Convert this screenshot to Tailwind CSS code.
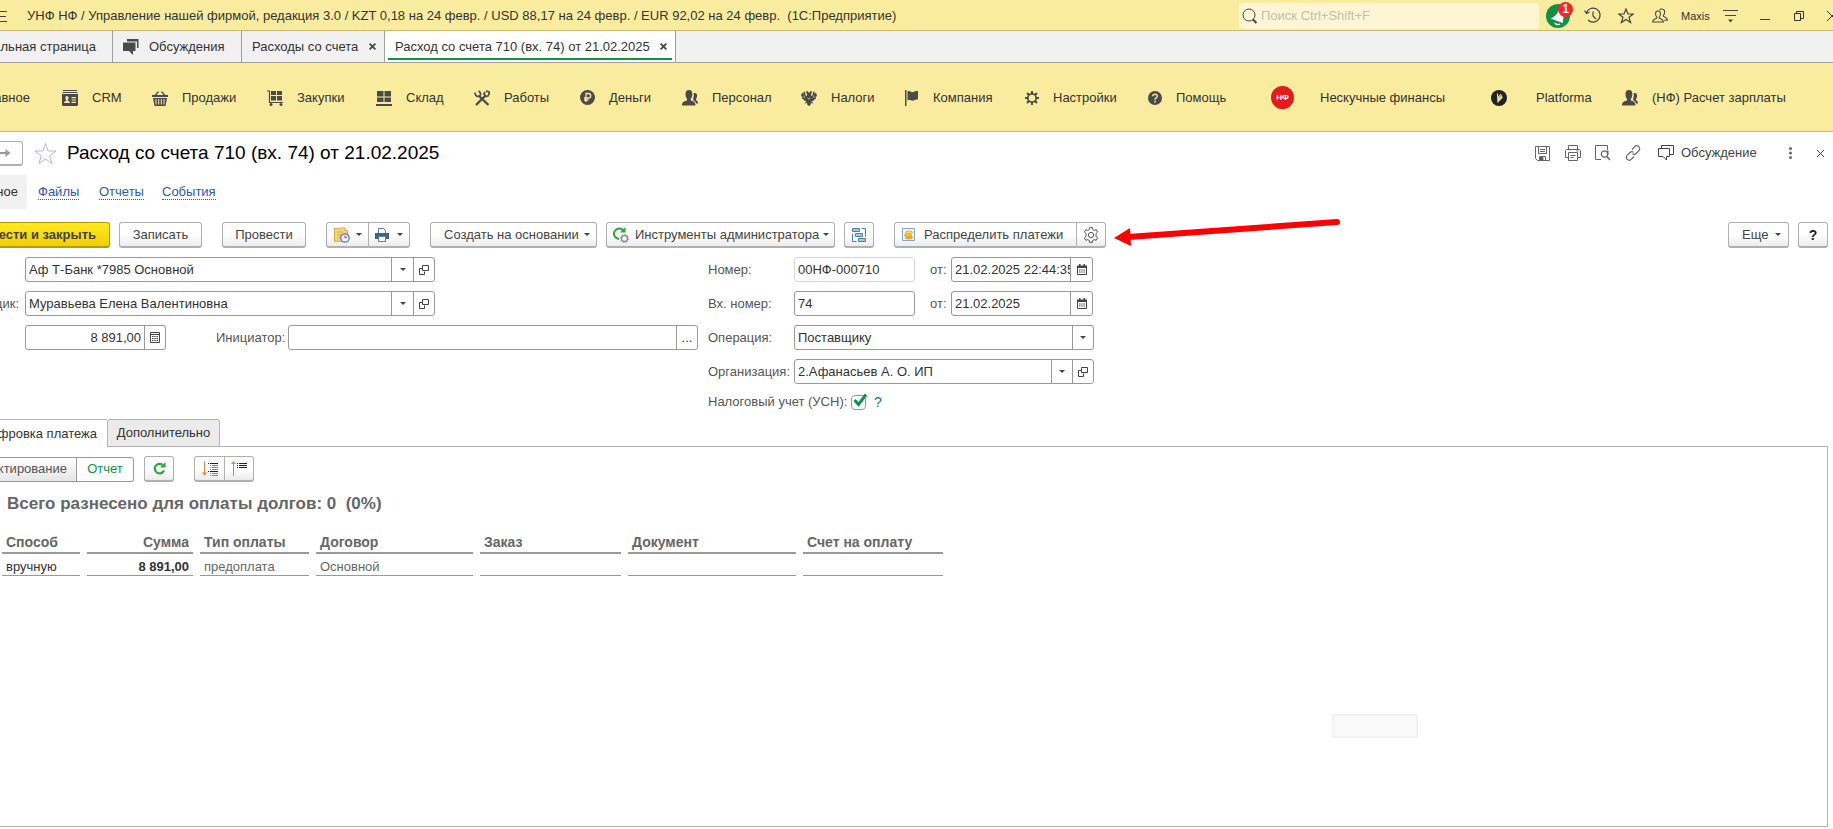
<!DOCTYPE html>
<html lang="ru">
<head>
<meta charset="utf-8">
<title>Расход со счета 710</title>
<script src="https://cdn.jsdelivr.net/npm/@tailwindcss/browser@4"></script>
</head>
<body class="flex min-h-screen flex-col overflow-x-hidden bg-white font-['Liberation_Sans',Arial,sans-serif] text-[13px] leading-4 whitespace-nowrap text-[#333]">

<svg class="hidden" aria-hidden="true">
  <symbol id="tri" viewBox="0 0 6 3"><path d="M0 0h6L3 3z" fill="#444"/></symbol>
  <symbol id="open" viewBox="0 0 10 10"><path d="M3.500.5h6v5h-6zM3.500 3.500h-3v6h5v-3" fill="none" stroke="#444"/></symbol>
  <symbol id="cal" viewBox="0 0 10 11"><path d="M.5 2.500h9v8h-9z" fill="none" stroke="#444"/><path d="M0 1.500h10V4H0zM2 0h1.500v2H2zM6.500 0H8v2H6.500zM2 5.500h1.500v1H2zM4.300 5.500h1.400v1H4.300zM6.500 5.500H8v1H6.500zM2 7.500h1.500v1H2zM4.300 7.500h1.400v1H4.300zM6.500 7.500H8v1H6.500z" fill="#444"/></symbol>
  <symbol id="people" viewBox="0 0 16 16"><path d="M7 0C4.300 0 3.300 2 3.500 4.500c.1 2 .8 3.500 1.500 4.500v1.300c-2 1.200-5 1.200-5 5.200h13.500c0-4-3-4-4.700-5.200V9c.7-1 1.400-2.500 1.500-4.500C10.500 2 9.700 0 7 0z" fill="#4a4a4a"/><path d="M12.700 3c1.800 0 2.500 1.300 2.400 3-.1 1.400-.6 2.300-1.100 3v1c1 .8 2 1.200 2 3.500h-1.800c-.5-1.600-1.600-2.500-3-3.300V8.500c.5-1.400.7-3.400.4-5.200.3-.2.700-.3 1.100-.3z" fill="#4a4a4a"/></symbol>
</svg>

<header class="flex h-[31px] shrink-0 items-center overflow-hidden border-b border-[#c9b968] bg-[#faec9f] pt-px">
  <button class="h-4 w-[7px]" aria-label="Меню"><svg class="h-4 w-[7px]" viewBox="0 0 7 16"><path d="M0 3.500h7M0 8.500h6M0 13.500h7" stroke="#444"/></svg></button>
  <h1 class="ml-5 flex-1 whitespace-pre">УНФ НФ / Управление нашей фирмой, редакция 3.0 / KZT 0,18 на 24 февр. / USD 88,17 на 24 февр. / EUR 92,02 на 24 февр.  (1С:Предприятие)</h1>
  <label class="flex h-[26px] w-[300px] items-center rounded-sm bg-[#fdf5d3] pl-[3px]">
    <svg class="size-4" viewBox="0 0 16 16" fill="none" stroke="#444"><circle cx="7" cy="7" r="6"/><path d="m11 11.500 3.500 3.500" stroke-width="2"/></svg>
    <input type="search" aria-label="Поиск" placeholder="Поиск Ctrl+Shift+F" class="ml-[3px] w-60 bg-transparent outline-none placeholder:text-[#bfbfb8]">
  </label>
  <button class="relative ml-[7px] size-6" aria-label="Оповещения">
    <svg class="size-6" viewBox="0 0 24 24"><circle cx="12" cy="12" r="12" fill="#0b9444"/><path d="M12.500 6C11 11 8 13 4.500 14.500L17 19c-.5-3.500 1.500-5.500 0-9zM8 18.500c1 3 4.500 3.500 6.500 2l-1-1c-1.500.8-3 .3-4-.7z" fill="#fff"/></svg>
    <span class="absolute -top-[2px] left-3 flex size-[15px] items-center justify-center rounded-full bg-[#f22] text-xs font-bold text-white">1</span>
  </button>
  <button class="ml-[14px]" aria-label="История"><svg class="size-[17px]" viewBox="0 0 17 17" fill="none" stroke="#444" stroke-width="1.200"><path d="M2.500 5.500A7 7 0 1 1 4 13M.500 3.500l2 3 3-1.500M9 4.500V9l3 3"/></svg></button>
  <button class="ml-[17px]" aria-label="Избранное"><svg class="size-4" viewBox="0 0 16 16" fill="none" stroke="#444" stroke-width="1.200"><path d="m8 1 2 5h5.200l-4.200 3.300 1.600 5.200L8 11.400l-4.600 3.100L5 9.300.8 6H6z"/></svg></button>
  <button class="ml-[18px]" aria-label="Пользователи"><svg class="size-4" viewBox="0 0 16 16" fill="none" stroke="#444" stroke-width="1.100"><path d="M6 3c-1.900 0-2.600 1.400-2.400 3.200.1 1.200.5 2.200 1.200 2.900v1C3 11.200.6 11.200.6 14h10.800c0-2.800-2.400-2.800-4.200-3.900v-1c.7-.7 1.100-1.700 1.200-2.900C8.600 4.400 7.900 3 6 3zM7.500 2C8.100 1.200 9 .900 10 1c2.200.1 2.800 1.700 2.600 3.500-.1 1.200-.5 2.200-1.200 2.900v1c1.800 1.100 4 1.100 4 3.900h-3.200"/></svg></button>
  <span class="ml-[13px] w-[29px] text-[11px]">Maxis</span>
  <button class="ml-[13px]" aria-label="Настройка"><svg class="size-[15px]" viewBox="0 0 15 15"><path d="M0 2.500h15M2 7.500h11" stroke="#444"/><path d="M5 11.500h5l-2.500 3z" fill="#444"/></svg></button>
  <button class="ml-[22px]" aria-label="Свернуть"><svg class="h-3 w-[10px]" viewBox="0 0 10 12"><path d="M0 9.500h10" stroke="#333"/></svg></button>
  <button class="ml-6" aria-label="Восстановить"><svg class="size-[10px]" viewBox="0 0 10 10" fill="none" stroke="#333"><path d="M.5 2.500h6v7h-6zM2.500 2.500v-2h7v7h-3"/></svg></button>
  <button class="ml-[23px] w-[6px] overflow-hidden" aria-label="Закрыть"><svg class="size-[10px]" viewBox="0 0 10 10" stroke="#333"><path d="m0 0 10 10M10 0 0 10"/></svg></button>
</header>

<div class="flex h-8 shrink-0 border-b border-[#a0a0a0] bg-[#f1f1f1]">
  <button class="flex w-[113px] items-center justify-end overflow-hidden border-r border-[#a0a0a0] pr-4">Начальная страница</button>
  <button class="flex w-[129px] items-center border-r border-[#a0a0a0] pl-[10px]">
    <svg class="size-4" viewBox="0 0 16 16" fill="#4a4a4a"><path d="M4 0h11.500v9H14V2.500H4z"/><path d="M0 3.500h12.500V12H10v4l-4-4H0z"/></svg>
    <span class="ml-[10px]">Обсуждения</span>
  </button>
  <div class="flex w-[143px] items-center border-r border-[#a0a0a0] pl-[10px]">
    <button class="w-[109px] text-left">Расходы со счета</button>
    <button class="ml-2" aria-label="Закрыть вкладку"><svg class="size-[7px]" viewBox="0 0 8 8" stroke="#444" stroke-width="2"><path d="m.7.7 6.600 6.600M7.300.7.7 7.300"/></svg></button>
  </div>
  <div class="flex w-[291px] border-r border-[#a0a0a0] bg-white px-[3px] pb-[2px]">
    <div class="flex flex-1 items-center border-b-2 border-[#0b9444] pt-1 pl-[7px]">
      <button class="w-[257px] text-left">Расход со счета 710 (вх. 74) от 21.02.2025</button>
      <button class="ml-2" aria-label="Закрыть вкладку"><svg class="size-[7px]" viewBox="0 0 8 8" stroke="#444" stroke-width="2"><path d="m.7.7 6.600 6.600M7.300.7.7 7.300"/></svg></button>
    </div>
  </div>
</div>

<nav class="flex h-[69px] shrink-0 items-center overflow-hidden border-b border-[#c9b968] bg-[#faec9f] pt-px">
  <a href="#" class="flex w-[30px] justify-end overflow-hidden">Главное</a>
  <a href="#" class="ml-8 flex w-[58px] items-center gap-[14px]"><svg class="size-4 shrink-0" viewBox="0 0 16 16"><path d="M1 0h14v1H1zM.5 2h15v1H.5z" fill="#4a4a4a"/><path d="M0 4h16v10.500c0 1-.5 1.500-1.500 1.500h-13C.5 16 0 15.500 0 14.500z" fill="#4a4a4a"/><path d="M5 6c-2 0-2 3-.7 4v.7C3 11.200 2.200 11.500 2 13h6c-.2-1.500-1-1.800-2.300-2.300V10C7 9 7 6 5 6zM9.500 7H14v1.200H9.500zM9.500 9.400H14v1.200H9.500zM9.500 11.800H14V13H9.500z" fill="#faec9f"/></svg>CRM</a>
  <a href="#" class="ml-8 flex w-[83px] items-center gap-[14px]"><svg class="size-4 shrink-0" viewBox="0 0 16 16"><path d="m2.500 6 4-4.500M13.500 6l-4-4.500" stroke="#4a4a4a" stroke-width="1.300"/><path d="M0 5h16v2H0zM1 8h14l-1.500 8h-11z" fill="#4a4a4a"/><path d="M4 9v5.500M6.700 9v5.500M9.300 9v5.500M12 9v5.500" stroke="#faec9f"/></svg>Продажи</a>
  <a href="#" class="ml-8 flex w-[78px] items-center gap-[14px]"><svg class="size-4 shrink-0" viewBox="0 0 16 16"><path d="M0 1h2.500v11.500H16" fill="none" stroke="#4a4a4a" stroke-width="1.200"/><path d="M4 1h5v4H4zM10 1h5v4h-5zM4 6h5v4.500H4zM10 6h5v4.500h-5z" fill="#4a4a4a"/><circle cx="4" cy="14.500" r="1.500" fill="#4a4a4a"/><circle cx="14" cy="14.500" r="1.500" fill="#4a4a4a"/></svg>Закупки</a>
  <a href="#" class="ml-[31px] flex w-[66px] items-center gap-[14px]"><svg class="size-4 shrink-0" viewBox="0 0 16 16" fill="#4a4a4a"><path d="M1 1h6.500v5.500H1zM8.500 1H15v5.500H8.500zM1 7.500h6.500V12H1zM8.500 7.500H15V12H8.500zM0 14h16v2H0z"/></svg>Склад</a>
  <a href="#" class="ml-8 flex w-[74px] items-center gap-[14px]"><svg class="size-4 shrink-0" viewBox="0 0 16 16" fill="none" stroke="#4a4a4a"><path d="M5 6 14.500 15M11 6l-9 9" stroke-width="2.400"/><path d="M1 2.500C1 6 3.500 7 5.500 6S6.500 2 4.500 1M11 2l-1 2 2 2.500 3-1M12 1l3 1v3" stroke-width="1.800"/></svg>Работы</a>
  <a href="#" class="ml-8 flex w-[71px] items-center gap-[14px]"><svg class="size-[15px] shrink-0" viewBox="0 0 15 15"><circle cx="7.500" cy="7.500" r="7.500" fill="#4a4a4a"/><path d="M6 12V3.500h2.500a2.200 2.200 0 0 1 0 4.500H4M4 10h4.500" fill="none" stroke="#faec9f" stroke-width="1.300"/></svg>Деньги</a>
  <a href="#" class="ml-[31px] flex w-[88px] items-center gap-[14px]"><svg class="size-4 shrink-0"><use href="#people"/></svg>Персонал</a>
  <a href="#" class="ml-[31px] flex w-[72px] items-center gap-[14px]"><svg class="size-4 shrink-0" viewBox="0 0 16 16"><path d="M8 3 6.500 1 5 1.500l.7 2L6 6 4.500 5.500 4 1.500 2.500 2v2L1 2.500 0 6l1.500 1L1 9l2 .5.500 1.500 2 0-2 2.500 2.500-.5.500 2 1.500 1 1.500-1 .5-2 2.500.5-2-2.500 2 0 .5-1.500 2-.5-.5-2L16 6l-1-3.500L13.500 4V2L12 1.500l-.5 4L10 6l.3-2.500.7-2L9.500 1z" fill="#4a4a4a"/><path d="M3.200 5.500v2.500M12.800 5.500v2.500M6.500 8l1.500 1 1.500-1" stroke="#faec9f" stroke-width=".7" fill="none"/></svg>Налоги</a>
  <a href="#" class="ml-8 flex w-[88px] items-center gap-[14px]"><svg class="h-4 w-[14px] shrink-0" viewBox="0 0 14 16" fill="#4a4a4a"><path d="M0 0h1.500v16H0zM2.500 1.500C5 0 6 3 8 2c1.500-.8 3-1 5-1v8.500c-2 0-3 0-4.500 1-2 1-3.500-1.500-6 0z"/></svg>Компания</a>
  <a href="#" class="ml-8 flex w-[91px] items-center gap-[14px]"><svg class="size-[14px] shrink-0" viewBox="0 0 14 14" fill="none" stroke="#4a4a4a"><circle cx="7" cy="7" r="4.200" stroke-width="1.800"/><path d="M7 0v2.500M7 11.500V14M0 7h2.500M11.500 7H14M2 2l2 2M10 10l2 2M2 12l2-2M10 4l2-2" stroke-width="2"/></svg>Настройки</a>
  <a href="#" class="ml-8 flex w-[79px] items-center gap-[14px]"><svg class="size-[14px] shrink-0" viewBox="0 0 14 14"><circle cx="7" cy="7" r="7" fill="#4a4a4a"/><path d="M4.800 5.300C4.800 2.500 9.500 2.500 9.300 5.300 9.200 7 7 6.800 7 8.700M7 9.800v1.700" fill="none" stroke="#faec9f" stroke-width="1.400"/></svg>Помощь</a>
  <a href="#" class="ml-[44px] flex w-[172px] items-center gap-[26px]"><span class="flex size-[23px] shrink-0 items-center justify-center rounded-full bg-[#e31b1b] text-[8px] font-bold text-white">НФ</span>Нескучные финансы</a>
  <a href="#" class="ml-[48px] flex w-[100px] items-center gap-[29px]"><svg class="size-4 shrink-0" viewBox="0 0 16 16"><circle cx="8" cy="8" r="8" fill="#222"/><path d="M6.500 3.500 7 12.500M7 11.500 11.500 7M7 8l3-4M7 9.800l4-4.300" fill="none" stroke="#f1e49a" stroke-width="1.200"/></svg>Platforma</a>
  <a href="#" class="ml-[31px] flex items-center gap-[14px]"><svg class="size-4 shrink-0"><use href="#people"/></svg>(НФ) Расчет зарплаты</a>
</nav>

<main class="relative flex flex-1 flex-col">
  <div class="mt-2 flex h-[26px] items-center pr-[9px]">
    <button class="flex h-[25px] w-[23px] items-center rounded-r-[3px] border border-b-2 border-l-0 border-[#b0b0b0] bg-white" aria-label="Вперед"><svg class="h-3 w-[11px]" viewBox="0 0 11 12"><path d="M0 6h8" stroke="#999" stroke-width="2"/><path d="m5.500 2 5 4-5 4z" fill="#999"/></svg></button>
    <button class="ml-[11px]" aria-label="В избранное"><svg class="size-[23px]" viewBox="0 0 23 23" fill="none" stroke="#b5b9c0"><path d="m11.500 1.500 2.600 7.500h8l-6.400 4.900 2.400 7.600-6.600-4.700-6.600 4.700 2.400-7.600L.900 9h8z"/></svg></button>
    <h2 class="ml-[10px] flex-1 text-[19px] leading-6 text-black">Расход со счета 710 (вх. 74) от 21.02.2025</h2>
    <button aria-label="Сохранить"><svg class="size-[15px]" viewBox="0 0 15 15" fill="none" stroke="#666"><path d="M.5.500h14v14h-12l-2-2zM3.500.500v7h8v-7M5 3.500h5M5 5.500h5M4.500 14.500v-4h6v4"/><path d="M5 11.500h3v3H5z" fill="#555"/></svg></button>
    <button class="ml-[15px]" aria-label="Печать"><svg class="size-4" viewBox="0 0 16 16" fill="none" stroke="#666"><path d="M3.500 4.500v-4h9v4M3.500 12.500h-3v-7l1-1h13l1 1v7h-3M3.500 7.500h9v8h-9zM5.500 10.500h5M5.500 12.500h3M11.500 6h2"/></svg></button>
    <button class="ml-[14px]" aria-label="Просмотр"><svg class="size-4" viewBox="0 0 16 16" fill="none" stroke="#666"><path d="M6 14.500H.5V.500h12V5"/><circle cx="9.500" cy="9" r="3.200" stroke-width="1.200"/><path d="M12 11.500 15 15M12.800 5.500V10" stroke-width="1.400"/></svg></button>
    <button class="ml-[14px]" aria-label="Ссылка"><svg class="size-4" viewBox="0 0 16 16" fill="none" stroke="#666" stroke-width="1.200"><path d="m7 4.500 2.500-2.700c1.300-1.300 3-1.300 4.200-.2 1.300 1.200 1.300 3 0 4.300L11 8.500c-1 1-2.500 1-3.500.3M9 11.500l-2.500 2.700c-1.300 1.300-3 1.300-4.200.2C1 13.200 1 11.400 2.300 10.100L5 7.500c1-1 2.500-1 3.500-.3"/></svg></button>
    <button class="ml-[17px] flex items-center gap-[7px] text-[#444]"><svg class="size-4" viewBox="0 0 16 16" fill="none" stroke="#444"><path d="M.5 3.500h11v8h-3V15L5 11.500H.500zM3.500 3V.500h12v9h-3.500"/></svg><span class="w-[76px] text-left">Обсуждение</span></button>
    <button class="ml-8" aria-label="Меню"><svg class="h-3 w-[3px]" viewBox="0 0 3 12" fill="#666"><circle cx="1.500" cy="1.500" r="1.500"/><circle cx="1.500" cy="6" r="1.500"/><circle cx="1.500" cy="10.500" r="1.500"/></svg></button>
    <button class="ml-[25px]" aria-label="Закрыть"><svg class="size-[7px]" viewBox="0 0 7 7" stroke="#444"><path d="m0 0 7 7M7 0 0 7"/></svg></button>
  </div>

  <div class="mt-[9px] flex h-[34px] items-center text-[#2a58b5]">
    <a href="#" class="flex h-[34px] w-[27px] items-center justify-end overflow-hidden rounded-r bg-[#f1f1f1] pr-[9px] text-[#333]">Основное</a>
    <a href="#" class="ml-[11px] w-[61px]"><span class="border-b border-dotted border-[#2a58b5]">Файлы</span></a>
    <a href="#" class="w-[63px]"><span class="border-b border-dotted border-[#2a58b5]">Отчеты</span></a>
    <a href="#"><span class="border-b border-dotted border-[#2a58b5]">События</span></a>
  </div>

  <div class="mt-[13px] flex h-[26px] pr-[5px] text-[#444]">
    <button class="flex w-[110px] items-center justify-end overflow-hidden rounded-r-[3px] border border-b-2 border-l-0 border-[#b39b00] bg-linear-to-b from-[#ffe91f] to-[#f2cf00] pr-[13px] font-bold">Провести и закрыть</button>
    <button class="ml-[9px] w-[83px] rounded-[3px] border border-b-2 border-[#b0b0b0] bg-linear-to-b from-white from-50% to-[#ececec]">Записать</button>
    <button class="ml-5 w-[84px] rounded-[3px] border border-b-2 border-[#b0b0b0] bg-linear-to-b from-white from-50% to-[#ececec]">Провести</button>
    <div class="ml-5 flex w-[84px] rounded-[3px] border border-b-2 border-[#b0b0b0] bg-linear-to-b from-white from-50% to-[#ececec]">
      <button class="flex w-[42px] items-center border-r border-[#b0b0b0] pl-[7px]" aria-label="Отложить"><svg class="size-4" viewBox="0 0 16 16"><path d="M.5 1.500C4 2.500 7 0 11 1v2.500h2.500v11C10 15 5 13.500.5 14.500z" fill="#f6d77c" stroke="#d4a84a"/><path d="M3 5h6M3 8h5M3 11h3" stroke="#d4a84a"/><circle cx="11" cy="11" r="4.200" fill="#e8f0fa" stroke="#5a7fb5" stroke-width="1.300"/><path d="M11 8.500V11l2-1" stroke="#d33" fill="none"/></svg><svg class="ml-[6px] h-[3px] w-[6px]"><use href="#tri"/></svg></button>
      <button class="flex flex-1 items-center pl-[6px]" aria-label="Печать"><svg class="size-[14px]" viewBox="0 0 14 14"><path d="M3.500 6V.500h5l2 2V6" fill="#fff" stroke="#5b7fa8"/><path d="M0 5h14v6H0z" fill="#3a6492"/><path d="M3.500 8.500h7v5h-7z" fill="#fff" stroke="#5b7fa8"/></svg><svg class="ml-2 h-[3px] w-[6px]"><use href="#tri"/></svg></button>
    </div>
    <button class="ml-5 flex w-[167px] items-center justify-between rounded-[3px] border border-b-2 border-[#b0b0b0] bg-linear-to-b from-white from-50% to-[#ececec] pr-[6px] pl-[13px]">Создать на основании<svg class="h-[3px] w-[6px]"><use href="#tri"/></svg></button>
    <button class="ml-[9px] flex w-[229px] items-center rounded-[3px] border border-b-2 border-[#b0b0b0] bg-linear-to-b from-white from-50% to-[#ececec] pr-[5px] pl-[6px]"><svg class="size-4" viewBox="0 0 16 16" fill="none"><path d="M6 12A5.300 5.300 0 1 1 10.500 3.500" stroke="#2fa53a" stroke-width="2"/><path d="M12.500 0v5.500H7z" fill="#2fa53a"/><circle cx="11.500" cy="11.500" r="3" stroke="#8a94a0" stroke-width="1.500"/><circle cx="11.500" cy="11.500" r="4.200" stroke="#8a94a0" stroke-dasharray="1.600 1.600"/></svg><span class="ml-[6px] flex-1 text-left">Инструменты администратора</span><svg class="h-[3px] w-[6px]"><use href="#tri"/></svg></button>
    <button class="ml-[9px] flex w-[30px] items-center justify-center rounded-[3px] border border-b-2 border-[#b0b0b0] bg-linear-to-b from-white from-50% to-[#ececec]" aria-label="Структура"><svg class="size-[14px]" viewBox="0 0 14 14" fill="#a9c6de" stroke="#4a82ae"><path d="M.5.500h7v3h-7zM3.500 5.500h7v3h-7zM6.500 10.500h7v3h-7z"/><path d="M9.500.500h4v8M.5 5.500v8h4" fill="none"/></svg></button>
    <div class="ml-5 flex w-[212px] rounded-[3px] border border-b-2 border-[#b0b0b0] bg-linear-to-b from-white from-50% to-[#ececec]">
      <button class="flex w-[182px] items-center border-r border-[#b0b0b0] pl-[7px]"><svg class="size-[13px]" viewBox="0 0 13 13"><path d="M.5.500h12v12H.500z" fill="#f2f6fb" stroke="#86a5c4"/><ellipse cx="7" cy="9.500" rx="3.700" ry="1.600" fill="#f0b31c" stroke="#b98410" stroke-width=".5"/><ellipse cx="6" cy="7" rx="3.700" ry="1.600" fill="#f7c93a" stroke="#b98410" stroke-width=".5"/><ellipse cx="7" cy="4.500" rx="3.700" ry="1.600" fill="#fbdc62" stroke="#b98410" stroke-width=".5"/></svg><span class="ml-[9px]">Распределить платежи</span></button>
      <button class="flex flex-1 items-center justify-center" aria-label="Настройка"><svg class="size-4" viewBox="0 0 16 16" fill="none" stroke="#555" stroke-linejoin="round"><path d="M6.600.600h2.800l.4 2 1.400.8 2-.7 1.400 2.400L13 6.600v2.800l1.600 1.500-1.400 2.400-2-.7-1.400.8-.4 2H6.600l-.4-2-1.400-.8-2 .7-1.400-2.400L3 9.400V6.600L1.400 5.100l1.400-2.400 2 .7 1.400-.8z"/><circle cx="8" cy="8" r="2.600"/></svg></button>
    </div>
    <span class="flex-1"></span>
    <button class="flex w-[61px] items-center rounded-[3px] border border-b-2 border-[#b0b0b0] bg-linear-to-b from-white from-50% to-[#ececec] pl-[13px]">Еще<svg class="ml-[7px] h-[3px] w-[6px]"><use href="#tri"/></svg></button>
    <button class="ml-[9px] w-[30px] rounded-[3px] border border-b-2 border-[#b0b0b0] bg-linear-to-b from-white from-50% to-[#ececec] text-sm font-bold text-[#222]">?</button>
  </div>

  <svg class="pointer-events-none absolute top-[86px] left-[1114px] h-8 w-[228px]" viewBox="0 0 228 32" aria-hidden="true"><path d="M14 19 223 4" stroke="#f00" stroke-width="6" stroke-linecap="round"/><path d="M0 20 16 10l1 18z" fill="#f00"/></svg>

  <div class="mt-[9px] flex">
    <div class="flex w-[708px] flex-col gap-[9px]">
      <div class="flex h-[25px] items-center">
        <div class="ml-[25px] flex h-[25px] w-[410px] rounded-[3px] border border-[#999]">
          <input aria-label="Счет" value="Аф Т-Банк *7985 Основной" class="w-0 flex-1 px-[3px] outline-none">
          <button class="flex w-[22px] items-center justify-center border-l border-[#999]" aria-label="Выбрать"><svg class="h-[3px] w-[6px]"><use href="#tri"/></svg></button>
          <button class="flex w-[21px] items-center justify-center border-l border-[#999]" aria-label="Открыть"><svg class="size-[10px]"><use href="#open"/></svg></button>
        </div>
      </div>
      <div class="flex h-[25px] items-center">
        <label for="supplier" class="flex w-[25px] justify-end overflow-hidden pr-[6px] text-[#555]">Поставщик:</label>
        <div class="flex h-[25px] w-[410px] rounded-[3px] border border-[#999]">
          <input id="supplier" value="Муравьева Елена Валентиновна" class="w-0 flex-1 px-[3px] outline-none">
          <button class="flex w-[22px] items-center justify-center border-l border-[#999]" aria-label="Выбрать"><svg class="h-[3px] w-[6px]"><use href="#tri"/></svg></button>
          <button class="flex w-[21px] items-center justify-center border-l border-[#999]" aria-label="Открыть"><svg class="size-[10px]"><use href="#open"/></svg></button>
        </div>
      </div>
      <div class="flex h-[25px] items-center">
        <div class="ml-[25px] flex h-[25px] w-[141px] rounded-[3px] border border-[#999]">
          <input aria-label="Сумма" value="8 891,00" class="w-0 flex-1 px-[3px] text-right outline-none">
          <button class="flex w-[21px] items-center justify-center border-l border-[#999]" aria-label="Калькулятор"><svg class="h-[11px] w-[10px]" viewBox="0 0 10 11"><path d="M.5.500h9v10h-9z" fill="none" stroke="#444"/><path d="M1 2h8v1H1zM2 4h1.500v1H2zM4.300 4h1.400v1H4.300zM6.500 4H8v1H6.500zM2 6h1.500v1H2zM4.300 6h1.400v1H4.300zM6.500 6H8v1H6.500zM2 8h1.500v1H2zM4.300 8h1.400v1H4.300zM6.500 8H8v1H6.500z" fill="#444"/></svg></button>
        </div>
        <label for="init" class="ml-[50px] w-[72px] text-[#555]">Инициатор:</label>
        <div class="flex h-[25px] w-[410px] rounded-[3px] border border-[#999]">
          <input id="init" class="w-0 flex-1 px-[3px] outline-none">
          <button class="flex w-[21px] items-center justify-center border-l border-[#999]" aria-label="Выбрать инициатора">...</button>
        </div>
      </div>
    </div>

    <div class="flex flex-col gap-[9px] text-[#555]">
      <div class="flex h-[25px] items-center">
        <label for="num" class="w-[86px]">Номер:</label>
        <input id="num" value="00НФ-000710" class="h-[25px] w-[121px] rounded-[3px] border border-[#d5d5d5] px-[3px] text-[#333] outline-none">
        <label for="d1" class="ml-[15px] w-[21px]">от:</label>
        <div class="flex h-[25px] w-[142px] rounded-[3px] border border-[#999] text-[#333]">
          <input id="d1" value="21.02.2025 22:44:35" class="ml-[3px] w-0 flex-1 outline-none">
          <button class="flex w-[22px] items-center justify-center border-l border-[#999]" aria-label="Календарь"><svg class="h-[11px] w-[10px]"><use href="#cal"/></svg></button>
        </div>
      </div>
      <div class="flex h-[25px] items-center">
        <label for="inum" class="w-[86px]">Вх. номер:</label>
        <input id="inum" value="74" class="h-[25px] w-[121px] rounded-[3px] border border-[#999] px-[3px] text-[#333] outline-none">
        <label for="d2" class="ml-[15px] w-[21px]">от:</label>
        <div class="flex h-[25px] w-[142px] rounded-[3px] border border-[#999] text-[#333]">
          <input id="d2" value="21.02.2025" class="ml-[3px] w-0 flex-1 outline-none">
          <button class="flex w-[22px] items-center justify-center border-l border-[#999]" aria-label="Календарь"><svg class="h-[11px] w-[10px]"><use href="#cal"/></svg></button>
        </div>
      </div>
      <div class="flex h-[25px] items-center">
        <label for="op" class="w-[86px]">Операция:</label>
        <div class="flex h-[25px] w-[300px] rounded-[3px] border border-[#999] text-[#333]">
          <input id="op" value="Поставщику" class="w-0 flex-1 px-[3px] outline-none">
          <button class="flex w-[21px] items-center justify-center border-l border-[#999]" aria-label="Выбрать"><svg class="h-[3px] w-[6px]"><use href="#tri"/></svg></button>
        </div>
      </div>
      <div class="flex h-[25px] items-center">
        <label for="org" class="w-[86px]">Организация:</label>
        <div class="flex h-[25px] w-[300px] rounded-[3px] border border-[#999] text-[#333]">
          <input id="org" value="2.Афанасьев А. О. ИП" class="w-0 flex-1 px-[3px] outline-none">
          <button class="flex w-[21px] items-center justify-center border-l border-[#999]" aria-label="Выбрать"><svg class="h-[3px] w-[6px]"><use href="#tri"/></svg></button>
          <button class="flex w-[21px] items-center justify-center border-l border-[#999]" aria-label="Открыть"><svg class="size-[10px]"><use href="#open"/></svg></button>
        </div>
      </div>
      <div class="flex h-[18px] items-center">
        <label for="usn" class="w-[143px]">Налоговый учет (УСН):</label>
        <span class="relative size-[15px]">
          <input id="usn" type="checkbox" checked class="block size-[15px] appearance-none rounded-sm border border-[#999] bg-white">
          <svg class="pointer-events-none absolute -top-[2px] left-[2px] h-[14px] w-[15px]" viewBox="0 0 15 14"><path d="m1.500 7 4 4.500L13 1.500" fill="none" stroke="#0b9444" stroke-width="3"/></svg>
        </span>
        <a href="#" class="ml-2 text-sm text-[#0a70c0]">?</a>
      </div>
    </div>
  </div>

  <div class="mt-2 flex h-7">
    <button class="flex w-[107px] items-center justify-end overflow-hidden border-t border-[#b3b3b3] bg-white pr-[10px]">Расшифровка платежа</button>
    <button class="w-[113px] rounded-t-[3px] border border-[#b3b3b3] bg-[#ebebeb]">Дополнительно</button>
    <span class="mr-[5px] flex-1 border-b border-[#b3b3b3]"></span>
  </div>

  <section class="relative mr-[5px] mb-[2px] flex-1 border-r border-b border-[#b3b3b3]">
    <div class="mt-[9px] flex h-[26px] items-center text-[#444]">
      <button class="flex h-[25px] w-[77px] items-center justify-end overflow-hidden border-y border-r border-[#999] bg-linear-to-b from-white to-[#e6e6e6] pr-[9px] text-[#555]">Редактирование</button>
      <button class="h-[25px] w-[57px] rounded-r-[3px] border border-l-0 border-[#999] bg-white text-[#0b9444]">Отчет</button>
      <button class="ml-[10px] flex h-[26px] w-[30px] items-center justify-center rounded-[3px] border border-b-2 border-[#b0b0b0] bg-linear-to-b from-white from-50% to-[#ececec]" aria-label="Обновить"><svg class="size-[13px]" viewBox="0 0 13 13"><path d="M11 8.500A4.800 4.800 0 1 1 9.500 2.800" fill="none" stroke="#2fa53a" stroke-width="2.200"/><path d="M12.500 0v5.500H7z" fill="#2fa53a"/></svg></button>
      <div class="ml-5 flex h-[26px] w-[60px] rounded-[3px] border border-b-2 border-[#b0b0b0] bg-linear-to-b from-white from-50% to-[#ececec]">
        <button class="flex w-[30px] items-center justify-center border-r border-[#b0b0b0]" aria-label="Развернуть"><svg class="h-[15px] w-4" viewBox="0 0 16 15"><path d="M2.500 0v12" stroke="#f08040"/><path d="M0 11.500h5l-2.500 3z" fill="#f08040"/><path d="M6 2.500h1M8 2.500h8M6 10.500h1M8 10.500h8" stroke="#222"/><path d="M8 4.500h1M10 4.500h6M8 6.500h1M10 6.500h6M8 8.500h1M10 8.500h6M8 12.500h1M10 12.500h6M8 14.500h1M10 14.500h6" stroke="#888"/></svg></button>
        <button class="flex flex-1 items-center justify-center" aria-label="Свернуть"><svg class="h-[15px] w-4" viewBox="0 0 16 15"><path d="M2.500 3v12" stroke="#f08040"/><path d="M0 3h5L2.500 0z" fill="#f08040"/><path d="M6 2.500h1M8 2.500h8M6 4.500h1M8 4.500h8M6 6.500h1M8 6.500h8" stroke="#222"/></svg></button>
      </div>
    </div>
    <p class="mt-3 ml-[7px] text-[17px] leading-5 font-bold whitespace-pre text-[#666]">Всего разнесено для оплаты долгов: 0  (0%)</p>
    <table class="mt-[17px] -ml-[5px] w-[955px] table-fixed border-separate border-spacing-x-[7px] border-spacing-y-0 text-left text-[#666]">
      <thead>
        <tr class="h-[23px] text-sm leading-5">
          <th class="w-[78px] border-b-2 border-[#999] px-1">Способ</th>
          <th class="w-[106px] border-b-2 border-[#999] px-1 text-right">Сумма</th>
          <th class="w-[109px] border-b-2 border-[#999] px-1">Тип оплаты</th>
          <th class="w-[157px] border-b-2 border-[#999] px-1">Договор</th>
          <th class="w-[141px] border-b-2 border-[#999] px-1">Заказ</th>
          <th class="w-[168px] border-b-2 border-[#999] px-1">Документ</th>
          <th class="w-[140px] border-b-2 border-[#999] px-1">Счет на оплату</th>
        </tr>
      </thead>
      <tbody>
        <tr class="h-[22px] align-bottom">
          <td class="border-b border-[#999] px-1 text-[#333]">вручную</td>
          <td class="border-b border-[#999] px-1 text-right font-bold text-[#333]">8 891,00</td>
          <td class="border-b border-[#999] px-1">предоплата</td>
          <td class="border-b border-[#999] px-1">Основной</td>
          <td class="border-b border-[#999]"></td>
          <td class="border-b border-[#999]"></td>
          <td class="border-b border-[#999]"></td>
        </tr>
      </tbody>
    </table>
    <div class="absolute top-[267px] left-[1332px] h-6 w-[86px] border-2 border-[#f2f2f2] bg-[#f9f9f9]"></div>
  </section>
</main>
</body>
</html>
